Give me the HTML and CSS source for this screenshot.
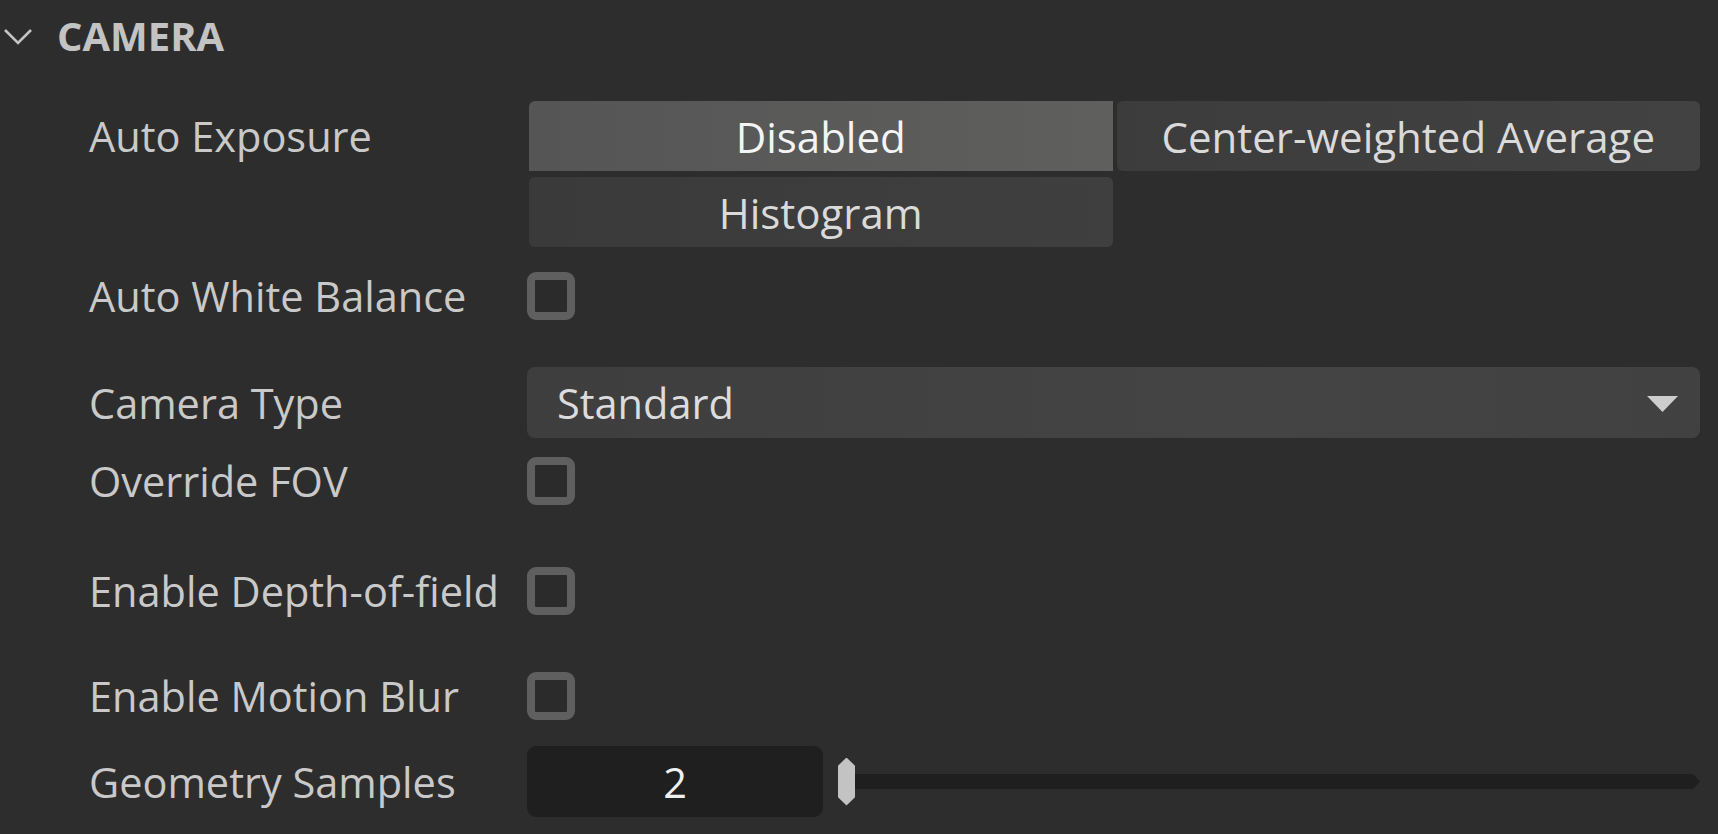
FILE: index.html
```html
<!DOCTYPE html>
<html lang="en">
<head>
<meta charset="utf-8">
<title>Camera</title>
<link rel="stylesheet" href="styles.css">
</head>
<body>
<div class="panel">
  <div class="header">
    <svg class="chevron" width="30" height="17" viewBox="0 0 30 17"><path d="M2 2 L15 15 L28 2" fill="none" stroke="#c4c4c4" stroke-width="2.6"/></svg>
    <span class="title">CAMERA</span>
  </div>

  <div class="row row-ae">
    <div class="label label-top">Auto Exposure</div>
    <div class="control segmented">
      <div class="seg seg-active">Disabled</div>
      <div class="seg">Center-weighted Average</div>
      <div class="seg seg-bottom">Histogram</div>
    </div>
  </div>

  <div class="row row-awb">
    <div class="label">Auto White Balance</div>
    <div class="control"><div class="checkbox"></div></div>
  </div>

  <div class="row row-ct">
    <div class="label">Camera Type</div>
    <div class="control dropdown">
      <span>Standard</span>
      <svg class="arrow" width="31" height="16" viewBox="0 0 31 16"><path d="M0 0 L31 0 L15.5 16 Z" fill="#cdcdcd"/></svg>
    </div>
  </div>

  <div class="row row-fov">
    <div class="label">Override FOV</div>
    <div class="control"><div class="checkbox"></div></div>
  </div>

  <div class="row row-dof">
    <div class="label">Enable Depth-of-field</div>
    <div class="control"><div class="checkbox"></div></div>
  </div>

  <div class="row row-mb">
    <div class="label">Enable Motion Blur</div>
    <div class="control"><div class="checkbox"></div></div>
  </div>

  <div class="row row-gs">
    <div class="label">Geometry Samples</div>
    <div class="control slider">
      <div class="number">2</div>
      <div class="track-wrap">
        <div class="track"></div>
        <div class="handle"></div>
      </div>
    </div>
  </div>
</div>
</body>
</html>
```
FILE: styles.css
```css
html, body {
  margin: 0;
  padding: 0;
}
body {
  width: 1718px;
  height: 834px;
  overflow: hidden;
  background: #2d2d2d;
  font-family: "Open Sans", "Noto Sans", "Liberation Sans", sans-serif;
  color: #c9c9c9;
}
.panel {
  display: flex;
  flex-direction: column;
  padding-right: 18px;
}
.header {
  height: 70px;
  display: flex;
  align-items: center;
}
.chevron {
  margin-left: 3px;
  margin-top: 2px;
  flex: none;
}
.title {
  margin-left: 24px;
  font-size: 40px;
  font-weight: 700;
  color: #c3c3c3;
}
.row {
  display: flex;
  align-items: center;
  padding-left: 89px;
  height: 71px;
}
.label {
  width: 438px;
  flex: none;
  font-size: 41.5px;
  white-space: nowrap;
}
.control {
  flex: 1;
  min-width: 0;
}
.row-ae {
  height: auto;
  align-items: flex-start;
  margin-top: 31px;
}
.label-top {
  line-height: 70px;
}
.segmented {
  display: grid;
  grid-template-columns: 1fr 1fr;
  gap: 6px 4px;
  padding-left: 2px;
}
.seg {
  height: 70px;
  display: flex;
  align-items: center;
  justify-content: center;
  background: linear-gradient(90deg, #3c3c3c, #424242);
  border-radius: 6px;
  font-size: 42px;
  color: #dadada;
}
.seg-active {
  background: linear-gradient(90deg, #555555, #5f5f5e);
  color: #f4f4f4;
  border-radius: 6px 0 0 0;
}
.seg-bottom {
  background: linear-gradient(90deg, #3a3a3a, #3f3f3f);
}
.row-awb { margin-top: 13px; }
.row-ct { margin-top: 36px; }
.row-fov { margin-top: 7px; }
.row-dof { margin-top: 39px; }
.row-mb { margin-top: 34px; }
.row-gs { margin-top: 15px; }

.checkbox {
  width: 48px;
  height: 48px;
  box-sizing: border-box;
  border: 8px solid #5f5f5f;
  border-radius: 9px;
  background: #2b2b2b;
}
.dropdown {
  height: 71px;
  display: flex;
  align-items: center;
  justify-content: space-between;
  padding: 0 22px 0 30px;
  background: linear-gradient(90deg, #3e3e3e, #444444 60%, #414141);
  border-radius: 8px;
  font-size: 41.5px;
  color: #dcdcdc;
}
.arrow {
  flex: none;
  margin-top: 2px;
}
.slider {
  display: flex;
  align-items: center;
  height: 71px;
}
.number {
  width: 296px;
  height: 71px;
  flex: none;
  display: flex;
  align-items: center;
  justify-content: center;
  background: #1f1f1f;
  border-radius: 9px;
  font-size: 41.5px;
  color: #efefef;
}
.track-wrap {
  flex: 1;
  position: relative;
  height: 48px;
  margin-left: 15px;
  display: flex;
  align-items: center;
}
.track {
  flex: 1;
  height: 15px;
  margin-left: 8px;
  background: #1f1f1f;
  clip-path: polygon(0 0, calc(100% - 7px) 0, 100% 50%, calc(100% - 7px) 100%, 0 100%);
}
.handle {
  position: absolute;
  left: 0;
  top: 0;
  width: 17px;
  height: 48px;
  background: #c3c3c3;
  clip-path: polygon(50% 0, 100% 17%, 100% 83%, 50% 100%, 0 83%, 0 17%);
}
```
